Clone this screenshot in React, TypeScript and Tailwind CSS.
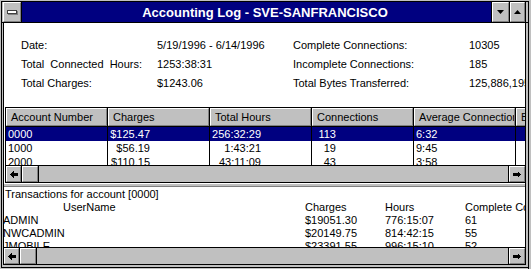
const raised =
  'bg-[#c0c0c0] border-t border-l border-t-white border-l-white border-b border-r border-b-[#808080] border-r-[#808080]';

const ArrowLeft = () => (
  <svg width="8" height="7" viewBox="0 0 8 7" shapeRendering="crispEdges">
    <polygon points="0,3.5 3.5,0 3.5,2 8,2 8,5 3.5,5 3.5,7" fill="#000" />
  </svg>
);

const ArrowRight = () => (
  <svg width="8" height="7" viewBox="0 0 8 7" shapeRendering="crispEdges">
    <polygon points="8,3.5 4.5,0 4.5,2 0,2 0,5 4.5,5 4.5,7" fill="#000" />
  </svg>
);

function ScrollBar() {
  return (
    <div className="h-[17px] shrink-0 flex border-t border-black bg-[#c0c0c0]">
      <div className="w-[16px] border-r border-black flex">
        <div className={`flex-1 flex items-center justify-center ${raised}`}>
          <ArrowLeft />
        </div>
      </div>
      <div className="w-[17px] border-r border-black flex">
        <div className={`flex-1 ${raised}`} />
      </div>
      <div className="flex-1" />
      <div className="w-[17px] border-l border-black flex">
        <div className={`flex-1 flex items-center justify-center ${raised}`}>
          <ArrowRight />
        </div>
      </div>
    </div>
  );
}

const columns = ['Account Number', 'Charges', 'Total Hours', 'Connections', 'Average Connection', 'Bytes'];

const accounts = [
  { id: '0000', charges: '$125.47', hours: '256:32:29', conns: '113', avg: '6:32' },
  { id: '1000', charges: '$56.19', hours: '1:43:21', conns: '19', avg: '9:45' },
  { id: '2000', charges: '$110.15', hours: '43:11:09', conns: '43', avg: '3:58' },
];

const transactions = [
  { user: 'ADMIN', charges: '$19051.30', hours: '776:15:07', complete: '61' },
  { user: 'NWCADMIN', charges: '$20149.75', hours: '814:42:15', complete: '55' },
  { user: 'JMOBILE', charges: '$23391.55', hours: '996:15:10', complete: '52' },
];

export default function App() {
  return (
    <div className="w-[531px] h-[269px] bg-[#c0c0c0] overflow-hidden flex pt-[1px] pl-[1px] text-[11px] text-black font-['Liberation_Sans',Arial,sans-serif]">
      {/* window */}
      <div className="w-[527px] h-[267px] flex flex-col border-l border-t border-b border-black">
        {/* Title bar */}
        <div className="h-[21px] shrink-0 flex pl-[1px] pr-[2px] border-b border-black">
          <div className="w-[19px] border-r border-black flex">
            <div className={`flex-1 flex items-center justify-center ${raised}`}>
              <div className="w-[10px] h-[4px] bg-white border border-[#404040] shadow-[1px_1px_0_#808080]" />
            </div>
          </div>
          <div className="flex-1 bg-[#000080] flex items-center justify-center pl-[17px] pt-[1px]">
            <span className="text-white font-bold text-[13px] whitespace-nowrap">
              Accounting Log - SVE-SANFRANCISCO
            </span>
          </div>
          <div className="w-[18px] border-l border-black flex">
            <div className={`flex-1 flex items-center justify-center ${raised}`}>
              <svg width="7" height="4" viewBox="0 0 7 4">
                <polygon points="0,0 7,0 3.5,4" fill="#000" />
              </svg>
            </div>
          </div>
          <div className="w-[17px] border-l border-r border-black flex">
            <div className={`flex-1 flex items-center justify-center ${raised}`}>
              <svg width="7" height="4" viewBox="0 0 7 4">
                <polygon points="0,4 7,4 3.5,0" fill="#000" />
              </svg>
            </div>
          </div>
        </div>

        {/* Body */}
        <div className="flex-1 flex flex-col pl-[1px] pr-[2px] pb-[2px] min-h-0">
          <div className="flex-1 flex flex-col border-l border-r border-b border-black bg-white min-h-0">
            {/* Summary */}
            <div className="h-[84px] shrink-0 pl-[17px] pt-[13px] leading-[19px] overflow-hidden">
              {[
                ['Date:', '5/19/1996 - 6/14/1996', 'Complete Connections:', '10305'],
                ['Total  Connected  Hours:', '1253:38:31', 'Incomplete Connections:', '185'],
                ['Total Charges:', '$1243.06', 'Total Bytes Transferred:', '125,886,195'],
              ].map((r) => (
                <div key={r[0]} className="flex whitespace-pre">
                  <div className="w-[136px] shrink-0">{r[0]}</div>
                  <div className="w-[136px] shrink-0">{r[1]}</div>
                  <div className="w-[176px] shrink-0">{r[2]}</div>
                  <div className="flex-1 overflow-hidden">{r[3]}</div>
                </div>
              ))}
            </div>

            {/* Accounts grid */}
            <div className="h-[76px] shrink-0 ml-[1px] flex flex-col border-l border-t border-b border-black bg-white">
              <div className="h-[19px] shrink-0 flex overflow-hidden border-b border-black bg-[#c0c0c0]">
                {columns.map((c) => (
                  <div key={c} className="w-[102px] shrink-0 flex border-r border-black">
                    <div className={`flex-1 flex items-center pl-[4px] whitespace-nowrap overflow-hidden ${raised}`}>
                      {c}
                    </div>
                  </div>
                ))}
              </div>
              <div className="h-[38px] shrink-0 overflow-hidden">
                {accounts.map((a, i) => (
                  <div
                    key={a.id}
                    className={`h-[14px] flex leading-[14px] whitespace-nowrap ${
                      i === 0 ? 'bg-[#000080] text-white' : ''
                    }`}
                  >
                    <div className="w-[102px] shrink-0 border-r border-black pl-[2px]">{a.id}</div>
                    <div className="w-[102px] shrink-0 border-r border-black">
                      <div className="w-[42px] text-right">{a.charges}</div>
                    </div>
                    <div className="w-[102px] shrink-0 border-r border-black">
                      <div className="w-[51px] text-right">{a.hours}</div>
                    </div>
                    <div className="w-[102px] shrink-0 border-r border-black">
                      <div className="w-[24px] text-right">{a.conns}</div>
                    </div>
                    <div className="w-[102px] shrink-0 border-r border-black pl-[2px]">{a.avg}</div>
                    <div className="flex-1" />
                  </div>
                ))}
              </div>
              <ScrollBar />
            </div>

            {/* Splitter */}
            <div className="h-[4px] shrink-0 bg-[#c0c0c0] border-t border-t-white border-b border-b-[#808080]" />

            {/* Transactions */}
            <div className="flex-1 min-h-0 overflow-hidden leading-[13px] pt-[1px] whitespace-nowrap">
              <div className="pl-[1px]">Transactions for account [0000]</div>
              <div className="flex">
                <div className="w-[301px] shrink-0 pl-[59px]">UserName</div>
                <div className="w-[80px] shrink-0">Charges</div>
                <div className="w-[80px] shrink-0">Hours</div>
                <div className="flex-1 overflow-hidden">Complete Connections</div>
              </div>
              {transactions.map((t) => (
                <div key={t.user} className="flex">
                  <div className="w-[301px] shrink-0 -ml-[1px] pr-[1px] box-content">{t.user}</div>
                  <div className="w-[80px] shrink-0">{t.charges}</div>
                  <div className="w-[80px] shrink-0">{t.hours}</div>
                  <div className="flex-1 overflow-hidden">{t.complete}</div>
                </div>
              ))}
            </div>
            <ScrollBar />
          </div>
        </div>
      </div>
      <div className="w-[1px] h-full bg-black" />
    </div>
  );
}
